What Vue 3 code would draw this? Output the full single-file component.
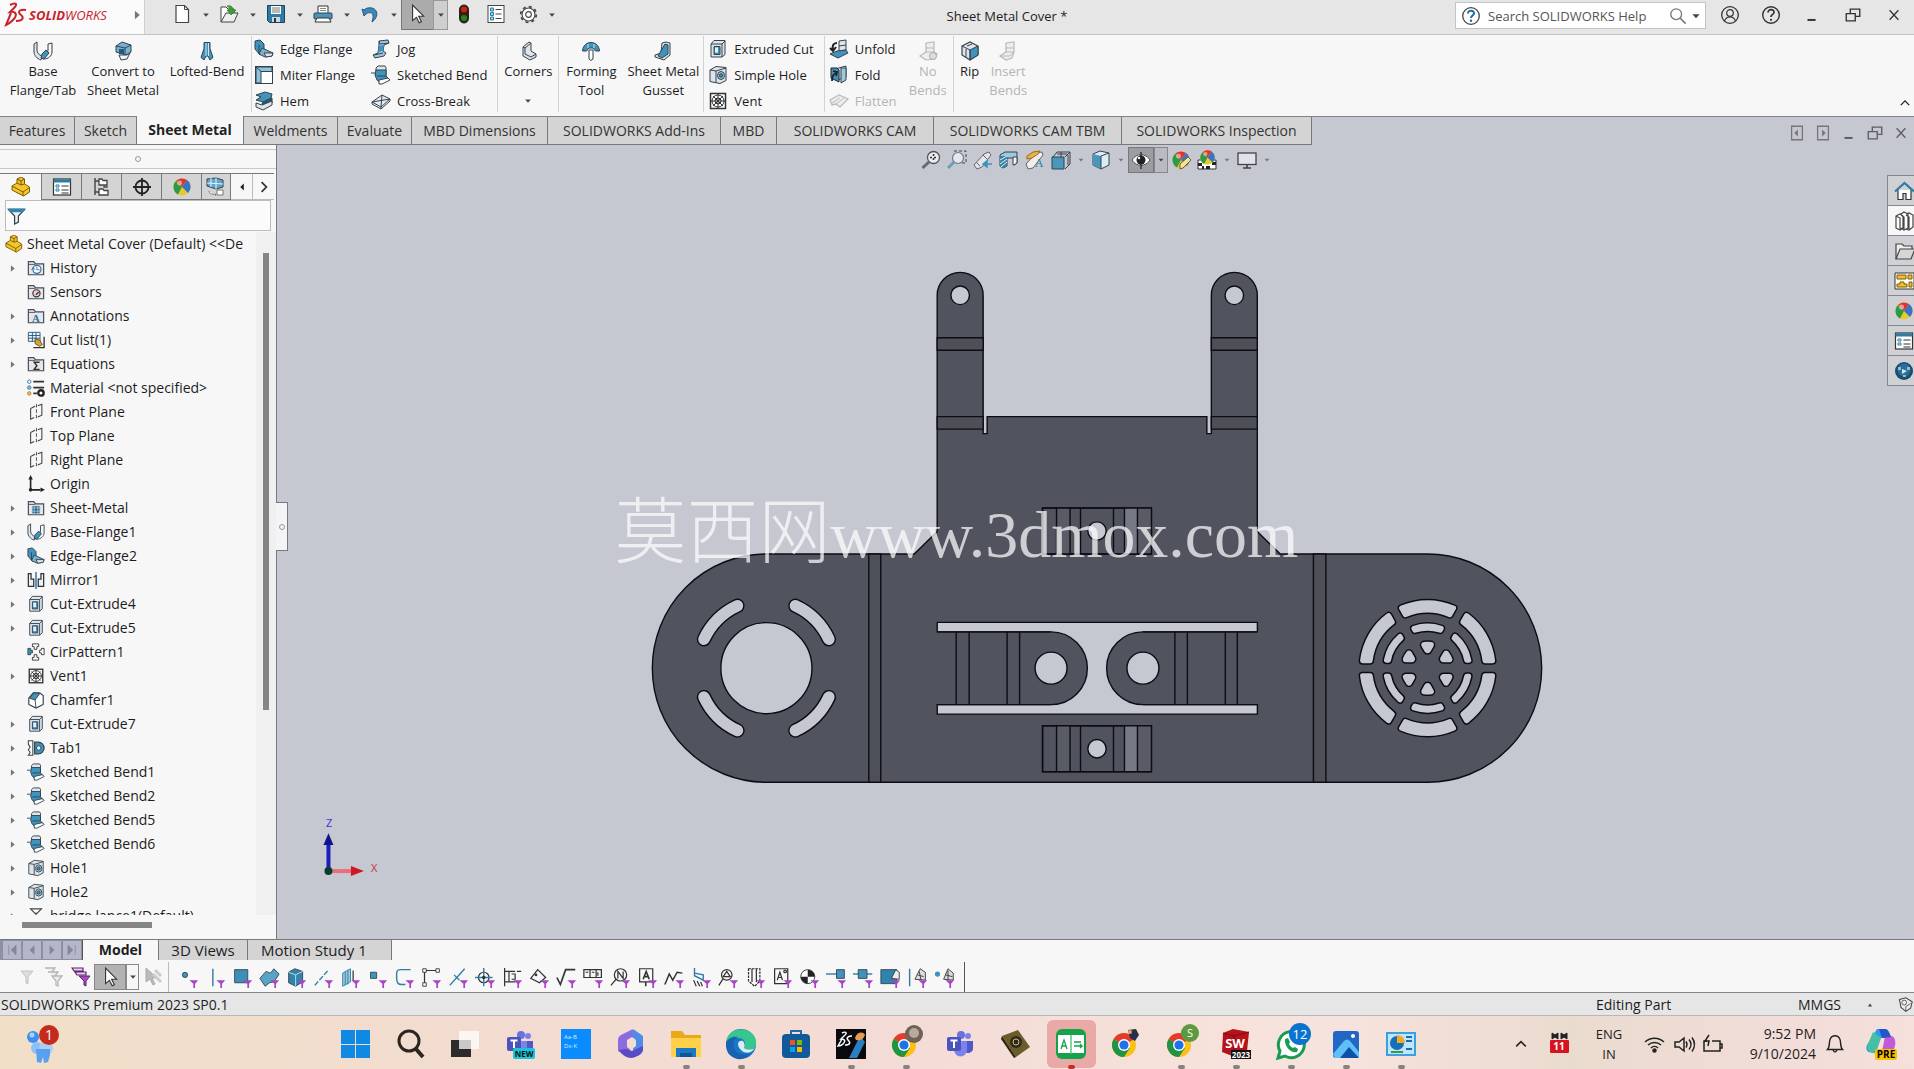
<script setup>
import { h } from 'vue'

const line = '#34424d'
const blue = '#3f93bd'
const pale = '#dfe4ea'

const folder = (inner) =>
  `<path d="M1.5 17.5V3h6l2 2.500h9v12z" fill="#e4e6ea" stroke="#444c55" stroke-width="1.300"/><path d="M2 6h7" stroke="#444c55"/>${inner}`
const plane = `<path d="M4 6l5-2.500M4 6v12l4-2M12 3l4.500-1.500v12l-4.500 2" fill="none" stroke="#444" stroke-width="1.200"/><path d="M10.500 1v17" stroke="#444" stroke-dasharray="4 2"/>`
const bend = `<path d="M5 3l2-2h7l1 1.500v8H5z" fill="${pale}" stroke="${line}"/><path d="M5 5h10v6l3 3-8 4-4-3-2-5z" fill="${blue}" stroke="${line}"/><path d="M0 8h4M6 11h9" stroke="${line}"/><path d="M8 15l9-2 2 2-8 4H8z" fill="#fff" stroke="${line}"/>`
const base = `<path d="M1 3l3-2v8c0 3 2 5 5 6l-1 4c-4-1-7-5-7-8z" fill="${pale}" stroke="${line}"/><path d="M15 3l4-1v9c0 4-4 7-8 7l-3-1 5-4c1-1 2-2 2-4z" fill="#f4f6f8" stroke="${line}"/><path d="M9 13l4-4 3 3-5 6-3-1z" fill="${blue}" stroke="${line}"/>`
const edge = `<path d="M1 2l5-1 4 4v8l-4 3-5-6z" fill="${blue}" stroke="${line}"/><path d="M5 6v9M8 9l11 5-1 3-7 1-6-3z" fill="#78b4d2" stroke="${line}"/><path d="M10 14l9 0-1 3-6 1z" fill="${pale}" stroke="${line}"/>`
const cut = `<path d="M3 5l3-3.500h11v14L14 18H3z" fill="${pale}" stroke="${line}"/><path d="M14 18V5H3M14 5l3-3" fill="none" stroke="${line}"/><path d="M6 7.500h6v8H6z" fill="${blue}" stroke="${line}"/><path d="M7 8.500h3v5H7z" fill="#e6f2f8"/>`
const hole = `<path d="M2 5l6-3.500 10 1v13l-6 3-10-2z" fill="${pale}" stroke="${line}"/><path d="M2 5l6 1v11.500M8 6l10-3" fill="none" stroke="${line}"/><ellipse cx="13" cy="10.500" rx="3.500" ry="4" fill="#9fc8dc" stroke="${line}"/><circle cx="13" cy="10.500" r="1.700" fill="${blue}" stroke="${line}"/>`
const vent = `<rect x="2.500" y="2.500" width="15" height="15" fill="#fff" stroke="#333" stroke-width="1.500"/><circle cx="10" cy="10" r="6" fill="none" stroke="#333"/><circle cx="10" cy="10" r="3" fill="none" stroke="#333"/><path d="M10 3v14M3 10h14M5 5l10 10M15 5L5 15" stroke="#333"/>`
const part = `<path d="M1 9l5-3V2l4-2 3.500 2v5l5 3v5l-6 4L1 13z" fill="#f5c52c" stroke="#7a5a00"/><path d="M1 9l11 6 6.500-4.500M12 15v4M6 6l4 2 3.500-1M6 2l4 2 3.500-2M10 4v4" fill="none" stroke="#7a5a00"/>`
const list = `<rect x="1.500" y="2" width="17" height="16" fill="#fff" stroke="#333" stroke-width="1.200"/><path d="M1.500 4h17" stroke="#2d7ca6" stroke-width="3"/><path d="M4 8h3v2H4zM4 12h3v2H4z" fill="none" stroke="#2d7ca6"/><path d="M9.500 9h7M9.500 13h7M9.500 16h7" stroke="#333"/>`
const ball = `<circle cx="10" cy="10" r="8.500" fill="#e8ca2e"/><path d="M10 10L4 4a8.500 8.500 0 0 1 11-1z" fill="#d33"/><path d="M10 10l5-7a8.500 8.500 0 0 1 1 13z" fill="#3a72c4"/><path d="M10 10L4 4a8.500 8.500 0 0 0 2 13.500z" fill="#2f9a45"/><circle cx="7.500" cy="6" r="2.500" fill="#fff" opacity=".5"/>`
const chrome = `<circle cx="14" cy="16" r="12" fill="#fbc116"/><path d="M14 16L3.600 10A12 12 0 0 1 24.400 10z" fill="#e33b2e"/><path d="M14 16L3.600 10A12 12 0 0 0 14 28l6-9z" fill="#229342"/><circle cx="14" cy="16" r="6" fill="#fff"/><circle cx="14" cy="16" r="4.600" fill="#1a73e8"/>`
const teams = `<circle cx="23" cy="8" r="3" fill="#7b83eb"/><circle cx="16" cy="7" r="4" fill="#6a72dc"/><path d="M19 13h9v8a5 5 0 0 1-8 3z" fill="#5059c9"/><path d="M9 13h13v9a6.500 6.500 0 0 1-13 0z" fill="#7b83eb"/><rect x="2" y="9" width="14" height="14" rx="2" fill="#4b53bc"/><path d="M5.500 12.500h7M9 12.500V20" stroke="#fff" stroke-width="2"/>`

const icons = {
  caret: `<path d="M6 8h8l-4 4.500z" fill="#444"/>`,
  caretUp: `<path d="M7 12h6l-3-4z" fill="#444"/>`,
  right: `<path d="M7 4l7 6-7 6z" fill="#777"/>`,
  left: `<path d="M13 4l-6 6 6 6z" fill="#222"/>`,
  chevR: `<path d="M7 4l6 6-6 6" fill="none" stroke="#333" stroke-width="2.200"/>`,
  chevU: `<path d="M4 13l6-6 6 6" fill="none" stroke="#222" stroke-width="1.900"/>`,
  newDoc: `<path d="M4 1.500h8.500l4 4v13H4z" fill="#fff" stroke="#444" stroke-width="1.200"/><path d="M12.500 1.500v4h4" fill="none" stroke="#444"/>`,
  open: `<path d="M2 18V3h5l2 2h6v4" fill="#fff" stroke="#444"/><path d="M2 18L7 9h12l-4 9z" fill="#eee" stroke="#444"/><path d="M8 2c4-1 6 1 6 4h3l-5 5-4-5h3c0-2-1-3-3-4z" fill="#3ba12f" stroke="#276c20" stroke-width=".6"/>`,
  save: `<path d="M1.500 1.500h17v17h-15l-2-2z" fill="#2d7ca6" stroke="#1f4257"/><path d="M5 2h10v8H5z" fill="#fff"/><path d="M6 4h8M6 6h8M6 8h8" stroke="#777"/><path d="M6 13h8v5H6z" fill="#cfd8de"/><path d="M8 14h2v4H8z" fill="#234"/>`,
  print: `<path d="M5 9V2h10v7" fill="#fff" stroke="#333"/><path d="M7 4.500h6M7 6.500h6" stroke="#888"/><rect x="1" y="9" width="18" height="6" rx="1" fill="#4c93b7" stroke="#26465a"/><path d="M4 14h12l2 4H2z" fill="#fff" stroke="#333"/>`,
  undo: `<path d="M2 5l2 7 2-2c4-3 8-1 7 4l-1 4c6-4 7-12 0-14-3-.700-6 0-8 2z" fill="#3f86b8" stroke="#24597e"/>`,
  cursor: `<path d="M6 2v14l3.500-3 2.500 5 2-1-2.500-5H16z" fill="#fff" stroke="#333"/>`,
  traffic: `<rect x="5.500" y="1" width="9" height="18" rx="4.500" fill="#3a1d10" stroke="#222"/><circle cx="10" cy="5.500" r="3" fill="#c62618"/><circle cx="10" cy="14" r="3" fill="#1f8a1a"/>`,
  options: `<rect x="2" y="1.500" width="16" height="17" fill="#fff" stroke="#444"/><path d="M4.500 4h3v3h-3zM4.500 8.500h3v3h-3zM4.500 13h3v3h-3z" fill="#9fd0e8" stroke="#2d7ca6"/><path d="M9.500 5.500h6M9.500 10h6M9.500 14.500h6" stroke="#444"/>`,
  gear: `<circle cx="10" cy="10" r="6.800" fill="#fff" stroke="#444" stroke-width="1.200"/><circle cx="10" cy="10" r="8.200" fill="none" stroke="#444" stroke-width="1.800" stroke-dasharray="3.200 3.240"/><circle cx="10" cy="10" r="3" fill="none" stroke="#444" stroke-width="1.200"/>`,
  query: `<circle cx="10" cy="10" r="8.300" fill="#fff" stroke="#444" stroke-width="1.300"/><path d="M7 7.500c0-4 6.500-3.500 6 0-.300 2-3 2-3 4.500" fill="none" stroke="#1b6fa5" stroke-width="2"/><circle cx="10" cy="14.800" r="1.200" fill="#1b6fa5"/>`,
  help: `<circle cx="10" cy="10" r="8.300" fill="none" stroke="#333" stroke-width="1.400"/><path d="M7 7.500c0-4 6.500-3.500 6 0-.300 2-3 2-3 4.500" fill="none" stroke="#333" stroke-width="1.700"/><circle cx="10" cy="14.800" r="1.100" fill="#333"/>`,
  user: `<circle cx="10" cy="10" r="8.300" fill="none" stroke="#333" stroke-width="1.300"/><circle cx="10" cy="8" r="3.300" fill="none" stroke="#333" stroke-width="1.200"/><path d="M4.500 16c1-3 3-4 5.500-4s4.500 1 5.500 4" fill="none" stroke="#333" stroke-width="1.200"/>`,
  magnify: `<circle cx="8" cy="8" r="6" fill="none" stroke="#777" stroke-width="1.500"/><path d="M12.500 12.500l6 6" stroke="#777" stroke-width="1.800"/>`,
  min: `<path d="M5 15.500h9" stroke="#333" stroke-width="2.200"/>`,
  restore: `<path d="M2.500 8.500h10v8h-10zM7 8V3.500h10.500v8H13" fill="none" stroke="#333" stroke-width="1.500"/>`,
  close: `<path d="M4.500 4l11 12M15.500 4l-11 12" stroke="#333" stroke-width="1.600"/>`,
  dockL: `<path d="M4 2.500h12v15H4z" fill="none" stroke="#555" stroke-width="1.400"/><path d="M11 6v8l-4-4z" fill="#555"/>`,
  dockR: `<path d="M4 2.500h12v15H4z" fill="none" stroke="#555" stroke-width="1.400"/><path d="M9 6v8l4-4z" fill="#555"/>`,
  base, edge, cut, hole, vent, bend, part, list, ball,
  convert: `<path d="M3 5l6-4 9 3v7l-5 3-10-3z" fill="#74b2d0" stroke="${line}"/><path d="M3 5l9 2v6M12 7l6-3" fill="none" stroke="${line}"/><path d="M6 8h5v5H6z" fill="#24597e"/><path d="M6 14h8l3-2-3 6-6 1z" fill="#f2f4f6" stroke="${line}"/>`,
  loft: `<path d="M7 1.500h6v6l3 9-3 2.500-2-4H9l-2 4-3-2.500 3-9z" fill="${blue}" stroke="${line}"/><path d="M9 2v13M11.500 2v13" stroke="#cfe5ef"/>`,
  miter: `<rect x="1.500" y="1.500" width="17" height="17" fill="#fff" stroke="${line}"/><path d="M2 2h16v4.500H7V18H2z" fill="#8cc3dd" stroke="${line}"/><path d="M2 2l5 4.500" stroke="${line}"/>`,
  hem: `<path d="M2 4l9-3 7 2-1 4-8 4-7-2 5-3z" fill="${blue}" stroke="${line}"/><path d="M18 7v5l-9 4-1-4z" fill="#24597e" stroke="${line}"/><path d="M2 12l6 2 10-4v4l-9 5-7-3z" fill="${pale}" stroke="${line}"/>`,
  jog: `<path d="M8 2l9-1 1 3-5 2-1 6 3 2-2 3-9 2-2-3 5-2 1-8z" fill="#9cc9df" stroke="${line}"/><path d="M8 2l1 3 9-1M3 16l9-2" fill="none" stroke="${line}"/><path d="M8 7l5-1-1 6-5 1z" fill="${blue}"/>`,
  cross: `<path d="M1 11l10-7 8 4-9 8z" fill="#e7ebf0" stroke="${line}"/><path d="M1 11l18-3M11 4l-1 12M10 16v2L1 13v-2M19 8v2l-9 8" fill="none" stroke="${line}"/>`,
  corner: `<path d="M5 6l6-5 2 1v8l5 3v3l-6 3-7-4z" fill="${pale}" stroke="${line}"/><path d="M5 6l2 1 6-5M7 7v6l6 3 5-3" fill="none" stroke="${line}"/>`,
  forming: `<path d="M1.500 10C2 4 6 1.500 10 1.500S18 4 18.500 10h-4L12 7H8l-2.500 3z" fill="${blue}" stroke="${line}"/><path d="M8 9h4v9l-2 1.500L8 18z" fill="#fff" stroke="${line}"/><path d="M7 3v4M13 3v4" stroke="#cfe5ef"/>`,
  gusset: `<path d="M9 2l4-1 4 1v12l-6 5-9-3v-2l6-2z" fill="#dbe3ea" stroke="${line}"/><path d="M12 3l3 1v9l-6 4-4-2z" fill="${blue}" stroke="${line}"/>`,
  unfold: `<path d="M10 2l7-1v10l-7 1zM10 7l7-1" fill="${pale}" stroke="${line}"/><path d="M8 12l9-1 2 3-10 5-8-4z" fill="${blue}" stroke="${line}"/><path d="M8 4c-4 0-5 3-4 7M1 9l3 3 3-4" fill="none" stroke="#222" stroke-width="2"/>`,
  fold: `<path d="M6 4l11-3v11l-9 3z" fill="${pale}" stroke="${line}"/><path d="M12 3l5 0v12l-5 3z" fill="#9cc9df" stroke="${line}"/><path d="M2 3l6 0 2 2v12l-8-4z" fill="${blue}" stroke="#222"/><path d="M3 16c0-5 1-7 4-8M4 6l4 1-1 4" fill="none" stroke="#222" stroke-width="1.800"/>`,
  flatten: `<path d="M1 9l9-5 9 4-8 8-4-3-4 1z" fill="#eee" stroke="#bbb" stroke-width="1.300"/><path d="M3 12l8-5M7 13l8-6" stroke="#bbb"/>`,
  noBends: `<path d="M8 2l8-1v10l3 2-3 5-8 1-6-4 6-4z" fill="#eee" stroke="#b9b9b9" stroke-width="1.200"/><path d="M8 7h8M8 11h8" stroke="#b9b9b9"/><circle cx="15" cy="15" r="3.500" fill="#ddd" stroke="#aaa"/>`,
  insBends: `<path d="M8 2l8-1v10l-2 6-6 2-6-4 6-4z" fill="#eee" stroke="#b9b9b9" stroke-width="1.200"/><path d="M8 7h8M8 11h8M2 15h10l4-4" fill="none" stroke="#b9b9b9"/>`,
  rip: `<path d="M2 5l8-4 8 4v9l-8 5-8-5z" fill="${pale}" stroke="${line}" stroke-width="1.200"/><path d="M10 9l8-4v9l-8 5z" fill="${blue}" stroke="${line}"/><path d="M2 5l8 4v10M7 5l5-2M6 8v8" fill="none" stroke="${line}"/>`,
  tree: `<path d="M3 1v17M3 4h4M3 15h4" stroke="#444" stroke-width="1.400"/><path d="M7 2h3l1 1.500h4V8H7zM7 12h4l1 1.500h4V18H7zM12 8v2h3V8" fill="#fff" stroke="#444" stroke-width="1.300"/>`,
  target: `<circle cx="10" cy="10" r="6.500" fill="none" stroke="#222" stroke-width="1.800"/><path d="M10 1v18M1 10h18" stroke="#222" stroke-width="1.800"/>`,
  cam: `<path d="M1 2l9-1 7 2v7l-7 2-9-3z" fill="#5fa6ca" stroke="${line}"/><path d="M5 1v9M10 1v11M1 6l16 1" stroke="#eaf4f9"/><path d="M3 14c0 3 4 4 7 3l-1 2M11 13h6v5h-6z" fill="#fff" stroke="#777"/>`,
  funnel: `<path d="M1.500 3.500h17L12 10.500V17l-4 2v-8.500z" fill="#eef1f3" stroke="${line}" stroke-width="1.300"/><path d="M1.500 2.500h17v2.500l-2 1.500h-13l-2-2z" fill="#3286ae"/>`,
  history: folder(`<circle cx="11" cy="11.500" r="4.500" fill="#fff" stroke="#2d6ea8" stroke-width="1.300"/><path d="M11 8.500v3.500h3M5 12l2-2.500L9 12" fill="none" stroke="#2d6ea8"/>`),
  sensors: folder(`<circle cx="10.500" cy="11.500" r="4" fill="#f3cfd6" stroke="#333" stroke-width="1.300"/><path d="M10 13l3-3" stroke="#333" stroke-width="1.500"/>`),
  annot: folder(`<text x="10" y="16.500" font-family="Liberation Serif, serif" font-weight="bold" font-size="12" text-anchor="middle" fill="#2b6fa0">A</text>`),
  cutlist: `<path d="M1.500 1.500h13v10h-13zM1.500 5h13M1.500 8h13M6 1.500v10M10 1.500v10" fill="#e8f2f8" stroke="#24597e"/><path d="M7 18.500h12v-12" fill="none" stroke="#333" stroke-width="1.500"/><path d="M9 9l5 1 3 5-3 2-5-3z" fill="#d9a33a" stroke="#6b4a10"/>`,
  equations: folder(`<path d="M14 8H8l3 4-3 4h6" fill="none" stroke="#333" stroke-width="1.600"/>`),
  material: `<circle cx="2.500" cy="3" r="1.900" fill="#fff" stroke="#2d6ea8"/><circle cx="2.500" cy="9.500" r="1.900" fill="#8cc3dd" stroke="#2d6ea8"/><circle cx="2.500" cy="16" r="1.900" fill="#f0c46a" stroke="#a87620"/><path d="M7 3h12M7 9.500h12M7 16h4" stroke="#333" stroke-width="2"/><circle cx="15.500" cy="15.500" r="3" fill="#fff" stroke="#222" stroke-width="2.600"/>`,
  plane,
  origin: `<path d="M4 4v12.500h11" fill="none" stroke="#222" stroke-width="1.800"/><path d="M4 0L1.500 5h5zM20 16.500l-5-2.500v5z" fill="#222"/><circle cx="4" cy="16.500" r="2" fill="#222"/>`,
  sheet: folder(`<path d="M6 8h8v8H6z" fill="#24597e"/><path d="M8 7v10M12 7v10M5 10h10M5 13.500h10" stroke="#9cc9df"/>`),
  mirror: `<path d="M1.500 3v14h6V9h-3V3zM18.500 3v14h-6V9h3V3z" fill="#e8f2f8" stroke="#333" stroke-width="1.400"/><path d="M10 1v19" stroke="#2d6ea8" stroke-width="1.600"/>`,
  cirpat: `<path d="M6 1h7v3h-2v3H8V4H6zM6 19h7v-3h-2v-3H8v3H6zM19 6v7h-3v-2h-2V8h2V6z" fill="#fff" stroke="#444" stroke-width="1.100"/><path d="M1 6v7h3v-2h2V8H4V6z" fill="${blue}" stroke="${line}"/>`,
  chamfer: `<path d="M2 8l5-6 7 0 4 3v10l-8 4-8-4z" fill="#fff" stroke="${line}" stroke-width="1.300"/><path d="M3 8l5-6 6 1-5 7z" fill="${blue}" stroke="${line}"/><path d="M9 10l1 9" stroke="${line}"/>`,
  tab: `<path d="M1.500 2h5v16h-5l2-3-2-3 2-3-2-3z" fill="#fff" stroke="#444" stroke-width="1.200"/><path d="M8.500 3.500h4a6.500 6.500 0 0 1 0 13h-4z" fill="${blue}" stroke="${line}" stroke-width="1.300"/><circle cx="13" cy="10" r="2.500" fill="#dff0f8" stroke="${line}"/>`,
  bridge: `<path d="M4 2h12l-5 5h-2zM10 7v10" fill="#fff" stroke="#444" stroke-width="1.300"/>`,
  zoomFit: `<circle cx="12.500" cy="7.500" r="6" fill="#e9edf1" stroke="#555" stroke-width="1.300"/><path d="M8 12l-6.500 6" stroke="#5b6c77" stroke-width="3"/><path d="M12.500 4v7M9 7.500h7" stroke="#333" stroke-width="1.500" stroke-dasharray="2 2"/>`,
  zoomArea: `<path d="M7 1h12v12h-4" fill="none" stroke="#444" stroke-dasharray="3 2"/><circle cx="11" cy="8" r="5.500" fill="#e3e8ee" stroke="#777" stroke-width="1.200"/><path d="M7 12l-6 6" stroke="#69a0b5" stroke-width="3"/>`,
  prev: `<path d="M1 15L11 4l5-2 2 3-9 12-5 2z" fill="#e2e5e9" stroke="#666"/><path d="M3 12l4 4M10 5l4 4" stroke="#666"/><path d="M19 14h-6M14 11l-4 3 4 3z" fill="${blue}" stroke="${blue}" stroke-width="1.500"/>`,
  section: `<path d="M1 5l5-3h12v11l-3 2V8H8v8l-4 2-3-2z" fill="#9cc9df" stroke="${line}"/><path d="M1 6h7v10l-4 2-3-2z" fill="#3582a8"/><path d="M1 10l7-4M1 14l7-5M2 17l6-5" stroke="#e4f2f8"/><path d="M14 7h4v6l-3 2h-1z" fill="#eef3f6" stroke="${line}"/>`,
  hide: `<path d="M1 14L11 3l6-1 1 3-10 13-5 1z" fill="#eee" stroke="#666"/><path d="M2 6l6-4 7-1-2 3-6 4-5 1z" fill="#e9b24a" stroke="#9a6a14"/><text x="14" y="17" font-family="Liberation Serif, serif" font-size="12" text-anchor="middle" fill="#2d7ca6">A</text>`,
  orient: `<path d="M1 7h12v12H1z" fill="#4a96bd" stroke="${line}"/><path d="M2 7l4-5h13v12l-5 5M14 7l5-5M6 4h10M17 5v10M10 2v5" fill="none" stroke="${line}"/>`,
  cube: `<path d="M2 4l7-3 9 2v12l-8 4-8-4z" fill="#dcecf4" stroke="${line}"/><path d="M2 4l8 2v13l-8-4z" fill="#4a96bd"/><path d="M10 6v13M10 6l8-3" stroke="${line}"/>`,
  eye: `<path d="M1 10c4-7 14-7 18 0-4 7-14 7-18 0z" fill="#fff" stroke="#555"/><circle cx="10" cy="10" r="4.500" fill="#222"/><path d="M10 2v17" stroke="#222" stroke-width="1.300"/><circle cx="8" cy="8" r="1.200" fill="#fff"/>`,
  appear: ball + `<path d="M9 14l8-7 3 3-8 8-3 1z" fill="#f3e3a0" stroke="#7a5a1a"/>`,
  scene: `<path d="M1 10h18v9H1z" fill="#fff" stroke="#333"/><path d="M1 13h4v3H1zM9 16h4v3H9zM15 12h4v3h-4zM5 16h2v3H5z" fill="#222"/><g transform="translate(2 -1) scale(.85)">${ball}</g>`,
  monitor: `<rect x="1" y="3" width="18" height="11.500" fill="#dfe2e8" stroke="#444" stroke-width="1.300"/><path d="M10 15v2.500M6 18h8" stroke="#444" stroke-width="1.600"/>`,
  home: `<path d="M4 9v9.500h5v-6h3v6h5V9" fill="#fff" stroke="#333" stroke-width="1.200"/><path d="M1 10.500L10.500 2 20 10.500" fill="none" stroke="#2d7ca6" stroke-width="2.200"/>`,
  books: `<path d="M2 5l4-2 3 2v12l-3 2-4-2zM7 3l3-2 4 2v14l-4 2-3-2M12 3l3-1 4 2v12l-4 3-3-1M2 5l4 2v11M7 4l3 2v12M12 4l3 2v12" fill="#fff" stroke="#444" stroke-width="1.200"/>`,
  folderOpen: `<path d="M2 18V3h6l2 2h8v3" fill="#eee" stroke="#444" stroke-width="1.200"/><path d="M2 18L6 8h15l-4 10z" fill="#d6d6d6" stroke="#444" stroke-width="1.200"/>`,
  palette: `<path d="M1 2h19v16H1z" fill="#fff" stroke="#333"/><path d="M3 4h9v4H3zM3 16v-3h3v-2h4v2h3v3zM14 4h4v4h-4zM15 11h3v5h-3z" fill="#f2c02b" stroke="#7a5a00"/>`,
  globe: `<circle cx="10" cy="10" r="9" fill="#1a4d70"/><circle cx="10" cy="9" r="6.500" fill="#2b6f98"/><path d="M4 6h3v3H4zM13 6h3v3h-3zM9 14h3v2H9z" fill="#bfe0ef" opacity=".7"/><path d="M8 8l5 2-5 3z" fill="#cfe8f3"/>`,
  first: `<path d="M6 4v12M15 4l-6 6 6 6z" fill="#84869a" stroke="#84869a"/>`,
  prv: `<path d="M13 4l-6 6 6 6z" fill="#84869a"/>`,
  nxt: `<path d="M7 4l6 6-6 6z" fill="#84869a"/>`,
  last: `<path d="M14 4v12M5 4l6 6-6 6z" fill="#84869a" stroke="#84869a"/>`,
  filt0: `<path d="M4 4h12l-5 6v7l-2-1v-6z" fill="#ddd" stroke="#c4c4c4"/>`,
  filt1: `<path d="M1 1h10l-3 4M4 5h10l-3 4M8 9h10l-4 5v5l-2-1v-4z" fill="#eee" stroke="#b5b5b5" stroke-width="1.300"/>`,
  filt2: `<path d="M1 1h11v3H3zM4 5h11v3H6z" fill="#e8d5ef" stroke="#5f2270" stroke-width="1.200"/><path d="M8 9h11l-4 5v5l-2-1v-4z" fill="#a54cc4" stroke="#5f2270"/>`,
  mag0: `<path d="M3 1v14l4-3 3 6 2-1-3-6h5z" fill="#bbb" stroke="#aaa"/><path d="M12 3l6 6M10 7l8 8" stroke="#ccc" stroke-width="3"/>`,
  status: `<path d="M3 3l8-2 8 5-2 8-6 4-6-5z" fill="#eee" stroke="#444" stroke-width="1.300"/><circle cx="9" cy="7" r="3" fill="none" stroke="#444"/><path d="M11 12l6-4M11 12v6" stroke="#444"/>`
}

// selection-filter glyphs, drawn beside the small purple funnel
const fs = `<path d="M13 15h10l-3.500 4v5h-2v-5z" fill="#a347c2"/>`
const dk = 'fill="none" stroke="#333" stroke-width="1.400"'
const bl = 'fill="none" stroke="#2d7ca6" stroke-width="1.600"'
const filters = [
  `<circle cx="8" cy="9" r="3" fill="${blue}" stroke="${line}"/>`,
  `<path d="M9 2v20" ${bl}/>`,
  `<path d="M3 3h15v15H3z" fill="#3c8fb8" stroke="${line}"/>`,
  `<path d="M1 13l7-8 5 2 4-5 6 6-6 9-5 1-5 4z" fill="#58a4c6" stroke="${line}"/>`,
  `<path d="M3 6l7-4 9 3v12l-8 5-8-4z" fill="#2f83ac" stroke="${line}"/><path d="M3 6l8 3 8-4M11 9v13" stroke="#cfe5ef" fill="none"/>`,
  `<path d="M2 21L18 3" stroke="#2d7ca6" stroke-width="1.500" stroke-dasharray="6 2"/>`,
  `<path d="M3 7l9-5v15l-9 5z" fill="#9cc9df" stroke="#2d7ca6"/><path d="M6 5v16M9 3v17" stroke="#2d7ca6"/><path d="M15 4v12" ${dk}/>`,
  `<path d="M4 6h7v7H4z" fill="${blue}" stroke="${line}"/>`,
  `<path d="M19 3H7c-4 0-4 3-4 6v4c0 5 2 7 6 7h4" ${bl}/>`,
  `<path d="M4 21V4h15" ${dk}/><path d="M2 2h4v4H2zM17 2h4v4h-4zM2 18h4v4H2z" fill="#fff" stroke="#333"/>`,
  `<path d="M2 21L19 2" ${bl}/><path d="M7 9l6 6" ${bl}/>`,
  `<circle cx="10" cy="12" r="6" ${dk}/><path d="M10 1v21M0 12h20" ${bl}/><circle cx="10" cy="12" r="2" fill="#333"/>`,
  `<path d="M3 1v21M3 5h12M3 17h12M8 5v12M11 8h4v6h-4" ${dk}/><path d="M17 5h5" ${dk}/>`,
  `<path d="M2 13l8-10 9 9-7 6z" ${dk}/><circle cx="8" cy="9" r="1.500" fill="#333"/>`,
  `<path d="M1 12l4 8L11 3h11" fill="none" stroke="#333" stroke-width="1.900"/>`,
  `<path d="M1 3h20v9H1zM8 3v9M15 3v9" ${dk}/><path d="M3 6h3M10 6h3M17 6v4" ${dk}/>`,
  `<circle cx="12" cy="9" r="7" ${dk}/><path d="M9 13V5l6 8V5M7 14l-6 7" ${dk}/>`,
  `<path d="M3 2h15v15H3z" ${dk}/><path d="M7 14l3.500-9L14 14M8 11h5M10 17v5" fill="none" stroke="#333" stroke-width="1.800"/>`,
  `<path d="M1 20l5-12 4 7 5-9 6 1" fill="none" stroke="#333" stroke-width="1.700"/>`,
  `<path d="M4 1v9l10 5V9L4 7" ${bl}/><path d="M3 15l3 7M7 16l3 6M11 17l2 5" ${dk}/>`,
  `<circle cx="10" cy="9" r="6" ${dk}/><path d="M6 11l4-6 4 6zM6 13l-5 8" ${dk}/>`,
  `<path d="M4 2h13v14l-6 6-7-6z" fill="none" stroke="#333" stroke-width="1.400" stroke-dasharray="3 1"/><path d="M8 2v15M13 2v15" ${dk}/>`,
  `<path d="M3 2h15v17H3z" ${dk}/><path d="M6 15l3-9 3 9M7 12h4" ${dk}/><circle cx="15" cy="5" r="1.500" ${dk}/>`,
  `<circle cx="10" cy="11" r="8" fill="#fff" stroke="#333"/><path d="M10 11V3a8 8 0 0 1 8 8zM10 11v8a8 8 0 0 1-8-8z" fill="#222"/>`,
  `<path d="M0 8h12" ${bl}/><path d="M12 3h9v10h-9z" fill="${blue}" stroke="${line}"/>`,
  `<path d="M0 8h22" ${bl}/><path d="M6 3h10v10H6z" fill="${blue}" stroke="${line}"/>`,
  `<path d="M1 3h18v16H1z" fill="#2f83ac" stroke="${line}"/><path d="M13 13l5-10 4 3v8z" fill="#eee" stroke="#333"/>`,
  `<path d="M3 2v20" ${bl}/><path d="M9 14l6-12 6 4v9z" fill="#ddd" stroke="#333"/><path d="M12 9l7 2M14 5l2 10" stroke="#333"/>`,
  `<circle cx="4" cy="8" r="3" fill="${blue}"/><path d="M11 14l5-12 6 5v8z" fill="#ddd" stroke="#333"/><path d="M13 9l8 2M16 4v11" stroke="#333"/>`
].map((g) => g + fs)

const apps = [
  { n: 'Start', g: `<path d="M1 2h14v14H1zM16 2h14v14H16zM1 17h14v13H1zM16 17h14v13H16z" fill="#1089e4"/>` },
  { n: 'Search', g: `<circle cx="14" cy="13" r="10" fill="none" stroke="#2b2522" stroke-width="3"/><path d="M21 21l7 8" stroke="#2b2522" stroke-width="4"/>` },
  { n: 'Task View', g: `<path d="M1 12h20v17H1z" fill="#2d2b2a"/><path d="M9 3h20v18H9z" fill="#fff" opacity=".75"/>` },
  { n: 'Teams', g: teams + `<rect x="8" y="20" width="22" height="11" rx="2" fill="#18c5d9"/><text x="19" y="29" font-family="Open Sans, sans-serif" font-weight="bold" font-size="8" text-anchor="middle" fill="#111">NEW</text>` },
  { n: 'Calculator', g: `<path d="M1 1h30v30H1z" fill="#0a8cff"/><text x="4" y="11" font-family="Open Sans, sans-serif" font-size="6" fill="#d9ecff">Aa-B</text><text x="4" y="20" font-family="Open Sans, sans-serif" font-size="6" fill="#d9ecff">Dx-K</text>` },
  { n: 'Microsoft 365', g: `<path d="M16 2c2-1 4 0 5 1l7 5v14c0 3-3 5-5 6l-5-3V13l-8-5z" fill="#4f8be8"/><path d="M16 2L6 7c-2 1-3 3-3 5v11l7 4c4 1 5-1 5-4V12c0-2 2-3 4-4z" fill="#8d6bdf"/><path d="M4 22c2 4 7 8 12 8s10-4 12-8v-4l-11 5-6-2z" fill="#5a4ac4"/><path d="M12 12l5-3 4 3v6l-5 4-4-3z" fill="#f1ddd2"/>` },
  { n: 'File Explorer', run: 1, g: `<path d="M1 3h11l3 4h16v20H1z" fill="#e9a918"/><path d="M1 10h30v19H1z" fill="#ffd04a"/><path d="M6 20h20v9H6z" fill="#1979c4"/><path d="M10 25h12v4H10z" fill="#0b5796"/>` },
  { n: 'Edge', run: 1, g: `<circle cx="16" cy="16" r="15" fill="#1778c8"/><path d="M1 15C2 4 12 0 20 2c9 2 12 9 11 15-1 5-8 6-12 3 3-5 0-10-6-10C7 10 2 12 1 15z" fill="#36c78f"/><path d="M1 15c2-5 7-7 12-6-5 2-6 8-3 13 3 4 9 6 16 3-5 7-14 8-20 3-4-3-5-8-5-13z" fill="#1762b3"/><path d="M13 16c0-3 3-4 5-3 2 2 2 5 1 7 3 2 8 2 11 0-3 5-9 6-13 3-2-2-4-4-4-7z" fill="#fff" opacity=".85"/>` },
  { n: 'Store', g: `<path d="M11 6V3h10v3" fill="none" stroke="#1c6aa6" stroke-width="2"/><rect x="2" y="6" width="28" height="24" rx="4" fill="#12599a"/><path d="M10 12h5v5h-5z" fill="#f25022"/><path d="M17 12h5v5h-5z" fill="#7fba00"/><path d="M10 19h5v5h-5z" fill="#00a4ef"/><path d="M17 19h5v5h-5z" fill="#ffb900"/>` },
  { n: '3DEXPERIENCE', run: 1, g: `<path d="M1 1h30v30H1z" fill="#0a0a0e"/><path d="M14 30L25 8l5 6-8 16z" fill="#2a7fc0"/><path d="M20 10c2-6 8-7 10-3-2 5-5 6-9 5z" fill="#e79a55"/><path d="M7 5c4-2 6 0 2 3L6 11c4 0 5 2 2 5-2 2-3 2-5 2l4-7M17 8c-4 0-6 2-4 4 3 3 2 5-3 5" fill="none" stroke="#fff" stroke-width="1.500"/>` },
  { n: 'Chrome', run: 1, g: `<g transform="translate(0 1)">${chrome}</g><circle cx="24" cy="6" r="9" fill="#6d6258"/><circle cx="24" cy="5" r="5" fill="#b9aa9b"/>` },
  { n: 'Teams', g: teams },
  { n: 'CAM tool', g: `<path d="M2 8L18 2l12 17-14 10z" fill="#6b5c2c"/><path d="M2 8l14 21-2 1L1 11z" fill="#2d2714"/><circle cx="16" cy="14" r="6" fill="#2e2a1c"/><circle cx="16" cy="14" r="3" fill="none" stroke="#cdbd7a"/>` },
  { n: 'Translate', run: 2, g: `<rect x="1" y="1" width="30" height="30" rx="6" fill="#15a34a"/><path d="M3 7h12l1 1 1-1h12v18H17l-1 1-1-1H3z" fill="#fff"/><path d="M16 8v18" stroke="#15a34a"/><path d="M6 21l3-9 3 9M7 18h4M19 14h7M19 18h8l-2-2M25 20l2-2" fill="none" stroke="#15a34a" stroke-width="1.300"/>` },
  { n: 'Chrome', g: `<g transform="translate(0 1)">${chrome}</g><path d="M18 2l8-1 3 6-4 6-5-3z" fill="#23304a"/><circle cx="20" cy="4" r="2" fill="#e2a36b"/>` },
  { n: 'Chrome', run: 1, g: `<g transform="translate(0 1)">${chrome}</g><circle cx="25" cy="5" r="9" fill="#5d9a3f"/><text x="25" y="9" font-family="Open Sans, sans-serif" font-size="11" text-anchor="middle" fill="#fff">S</text>` },
  { n: 'SOLIDWORKS', run: 1, g: `<path d="M3 5l10-4 16 3-2 19-12 6L2 24z" fill="#b5121b"/><path d="M3 5l11 3 15-4M14 8v20" fill="none" stroke="#7d0b12"/><text x="15" y="20" font-family="Open Sans, sans-serif" font-weight="bold" font-size="13" text-anchor="middle" fill="#fff">SW</text><path d="M11 22h20v9H11z" fill="#111"/><text x="21" y="30" font-family="Open Sans, sans-serif" font-weight="bold" font-size="8" text-anchor="middle" fill="#fff">2023</text>` },
  { n: 'WhatsApp', run: 1, g: `<path d="M3 30l2-7A13 13 0 1 1 10 28z" fill="#fff" stroke="#179c51" stroke-width="3"/><path d="M10 11l3-1 2 4-1 2c1 2 2 3 4 4l2-1 3 2-1 3c-6 2-13-6-12-13z" fill="#179c51"/><circle cx="25" cy="6" r="11" fill="#0a73cf"/><text x="25" y="11" font-family="Open Sans, sans-serif" font-size="13" text-anchor="middle" fill="#fff">12</text>` },
  { n: 'Photos', run: 1, g: `<rect x="3" y="3" width="26" height="27" rx="3" fill="#2067c6"/><path d="M3 26l11-13c2-2 4-2 6 0l9 11v4l-2 2H5z" fill="#5fc0f7"/><path d="M10 30l9-11 10 11z" fill="#0f4fa6"/><circle cx="23" cy="8" r="2" fill="#fff"/>` },
  { n: 'Control Panel', run: 1, g: `<rect x="1" y="4" width="30" height="24" fill="#3aa0e0"/><rect x="3" y="6" width="26" height="20" fill="#bfe6fa"/><circle cx="12" cy="15" r="7" fill="#1370b8"/><path d="M12 15V7a8 8 0 0 1 8 8z" fill="#f5a623"/><path d="M21 9h6M21 13h6M21 21h6" stroke="#1370b8" stroke-width="2"/><path d="M6 24h12" stroke="#3c9a3c" stroke-width="2"/>` }
]

const Ico = (props) =>
  h('svg', {
    viewBox: props.box || '0 0 20 20',
    width: props.size || 20,
    height: props.size || 20,
    'aria-hidden': 'true',
    innerHTML: props.g || icons[props.name]
  })
Ico.props = ['name', 'size', 'box', 'g']

const quick = [
  ['newDoc', 'New'], ['open', 'Open'], ['save', 'Save'], ['print', 'Print'], ['undo', 'Undo']
]
const ribbonTabs = ['Features', 'Sketch', 'Sheet Metal', 'Weldments', 'Evaluate', 'MBD Dimensions', 'SOLIDWORKS Add-Ins', 'MBD', 'SOLIDWORKS CAM', 'SOLIDWORKS CAM TBM', 'SOLIDWORKS Inspection']
const colA = [['edge', 'Edge Flange'], ['miter', 'Miter Flange'], ['hem', 'Hem']]
const colB = [['jog', 'Jog'], ['bend', 'Sketched Bend'], ['cross', 'Cross-Break']]
const colC = [['cut', 'Extruded Cut'], ['hole', 'Simple Hole'], ['vent', 'Vent']]
const colD = [['unfold', 'Unfold'], ['fold', 'Fold'], ['flatten', 'Flatten', 1]]

const panelTabs = [['part', 'FeatureManager'], ['list', 'PropertyManager'], ['tree', 'ConfigurationManager'], ['target', 'DimXpert'], ['ball', 'DisplayManager']]
const tree = [
  ['history', 'History', 1], ['sensors', 'Sensors'], ['annot', 'Annotations', 1], ['cutlist', 'Cut list(1)', 1],
  ['equations', 'Equations', 1], ['material', 'Material <not specified>'], ['plane', 'Front Plane'],
  ['plane', 'Top Plane'], ['plane', 'Right Plane'], ['origin', 'Origin'], ['sheet', 'Sheet-Metal', 1],
  ['base', 'Base-Flange1', 1], ['edge', 'Edge-Flange2', 1], ['mirror', 'Mirror1', 1], ['cut', 'Cut-Extrude4', 1],
  ['cut', 'Cut-Extrude5', 1], ['cirpat', 'CirPattern1'], ['vent', 'Vent1', 1], ['chamfer', 'Chamfer1'],
  ['cut', 'Cut-Extrude7', 1], ['tab', 'Tab1', 1], ['bend', 'Sketched Bend1', 1], ['bend', 'Sketched Bend2', 1],
  ['bend', 'Sketched Bend5', 1], ['bend', 'Sketched Bend6', 1], ['hole', 'Hole1', 1], ['hole', 'Hole2', 1],
  ['bridge', 'bridge lance1(Default)', 1]
]
const heads = [
  ['zoomFit', 'Zoom to Fit'], ['zoomArea', 'Zoom to Area'], ['prev', 'Previous View'], ['section', 'Section View'],
  ['hide', 'Dynamic Annotation Views'], ['orient', 'View Orientation', 1], ['cube', 'Display Style', 1],
  ['eye', 'Hide/Show Items', 1, 1], ['appear', 'Edit Appearance'], ['scene', 'Apply Scene', 1], ['monitor', 'View Settings', 1]
]
const pane = [['home', 'Resources'], ['books', 'Design Library'], ['folderOpen', 'File Explorer'], ['palette', 'View Palette'], ['ball', 'Appearances'], ['list', 'Custom Properties'], ['globe', 'Forum']]

// vent openings: ring sectors between spokes, shrunk by the corner radius
const sector = (mid, inner, outer, gap) => {
  const pt = (r, a) => `${(r * Math.cos(a)).toFixed(2)} ${(r * Math.sin(a)).toFixed(2)}`
  const half = Math.PI / 6
  const spread = (r) => Math.max(0, half - Math.asin(Math.min(1, gap / r)))
  const o = spread(outer)
  const i = spread(inner)
  return `M${pt(inner, mid - i)}L${pt(outer, mid - o)}A${outer} ${outer} 0 0 1 ${pt(outer, mid + o)}L${pt(inner, mid + i)}A${inner} ${inner} 0 0 0 ${pt(inner, mid - i)}Z`
}
const vents = []
for (let k = 0; k < 6; k++) {
  const a = (k * Math.PI) / 3 + Math.PI / 6
  vents.push(
    { d: sector(a, 58, 65.5, 7.5), w: 6 },
    { d: sector(a, 40, 42, 8), w: 6 },
    { d: sector(a, 18, 23.5, 8.8), w: 7 }
  )
}
const slots = [0, 90, 180, 270]
</script>

<template>
  <div class="desktop">
    <header class="title">
      <div class="brand">
        <svg width="24" height="26" viewBox="0 0 24 26" aria-hidden="true">
          <path d="M6 3c6-3 8-1 4 3L6 10c6-1 8 3 3 8-2 2-4 4-7 5l5-12M22 8c-5-1-9 1-6 4 4 3 4 7-4 7" fill="none" stroke="#c8232c" stroke-width="2" />
        </svg>
        <span class="word"><b>SOLID</b>WORKS</span>
        <Ico class="more" name="right" :size="14" />
      </div>
      <div class="quick">
        <template v-for="q in quick" :key="q[1]">
          <button class="q" :aria-label="q[1]"><Ico :name="q[0]" :size="20" /></button>
          <button class="drop" :aria-label="q[1] + ' options'"><Ico name="caret" :size="14" /></button>
        </template>
        <button class="q on" aria-label="Select"><Ico name="cursor" :size="22" /></button>
        <button class="drop on2" aria-label="Select options"><Ico name="caret" :size="14" /></button>
        <button class="q" aria-label="Rebuild"><Ico name="traffic" :size="20" /></button>
        <button class="q" aria-label="File properties"><Ico name="options" :size="20" /></button>
        <button class="q" aria-label="Options"><Ico name="gear" :size="19" /></button>
        <button class="drop" aria-label="More options"><Ico name="caret" :size="14" /></button>
      </div>
      <h1>Sheet Metal Cover *</h1>
      <label class="search">
        <Ico name="query" :size="20" />
        <input type="text" placeholder="Search SOLIDWORKS Help" aria-label="Search help" />
        <Ico name="magnify" :size="18" />
        <Ico name="caret" :size="18" />
      </label>
      <div class="win">
        <button aria-label="Account"><Ico name="user" :size="20" /></button>
        <button aria-label="Help"><Ico name="help" :size="20" /></button>
        <button aria-label="Minimize"><Ico name="min" :size="18" /></button>
        <button aria-label="Restore"><Ico name="restore" :size="18" /></button>
        <button aria-label="Close"><Ico name="close" :size="16" /></button>
      </div>
    </header>

    <section class="ribbon">
      <div class="group first">
        <button class="big w80"><Ico name="base" :size="20" /><span>Base<br />Flange/Tab</span></button>
        <button class="big w80"><Ico name="convert" :size="20" /><span>Convert to<br />Sheet Metal</span></button>
        <button class="big w88"><Ico name="loft" :size="20" /><span>Lofted-Bend</span></button>
      </div>
      <div class="group">
        <div class="col colA"><button v-for="b in colA" :key="b[1]"><Ico :name="b[0]" :size="20" />{{ b[1] }}</button></div>
        <div class="col"><button v-for="b in colB" :key="b[1]"><Ico :name="b[0]" :size="20" />{{ b[1] }}</button></div>
      </div>
      <div class="group">
        <button class="big w60"><Ico name="corner" :size="20" /><span>Corners</span><Ico class="dn" name="caret" :size="14" /></button>
      </div>
      <div class="group">
        <button class="big w64"><Ico name="forming" :size="20" /><span>Forming<br />Tool</span></button>
        <button class="big w80"><Ico name="gusset" :size="20" /><span>Sheet Metal<br />Gusset</span></button>
      </div>
      <div class="group">
        <div class="col"><button v-for="b in colC" :key="b[1]"><Ico :name="b[0]" :size="20" />{{ b[1] }}</button></div>
      </div>
      <div class="group">
        <div class="col colD"><button v-for="b in colD" :key="b[1]" :disabled="!!b[2]"><Ico :name="b[0]" :size="20" />{{ b[1] }}</button></div>
        <button class="big w50" disabled><Ico name="noBends" :size="20" /><span>No<br />Bends</span></button>
      </div>
      <div class="group last">
        <button class="big w32"><Ico name="rip" :size="20" /><span>Rip</span></button>
        <button class="big w45" disabled><Ico name="insBends" :size="20" /><span>Insert<br />Bends</span></button>
      </div>
      <button class="collapse" aria-label="Collapse ribbon"><Ico name="chevU" :size="14" /></button>
    </section>

    <nav class="tabs">
      <div class="strip">
        <button v-for="t in ribbonTabs" :key="t" :class="{ cur: t === 'Sheet Metal' }">{{ t }}</button>
      </div>
      <div class="mdi">
        <button aria-label="Expand left"><Ico name="dockL" :size="18" /></button>
        <button aria-label="Expand right"><Ico name="dockR" :size="18" /></button>
        <button aria-label="Minimize document"><Ico name="min" :size="18" /></button>
        <button aria-label="Restore document"><Ico name="restore" :size="18" /></button>
        <button aria-label="Close document"><Ico name="close" :size="16" /></button>
      </div>
    </nav>

    <main class="work">
      <aside class="panel">
        <div class="grip"><i></i></div>
        <div class="ptabs">
          <button v-for="(p, n) in panelTabs" :key="p[1]" :class="{ cur: n === 0 }" :aria-label="p[1]"><Ico :name="p[0]" :size="20" /></button>
          <button class="half" aria-label="CAM tree"><Ico name="cam" :size="20" /></button>
          <button class="arr" aria-label="Scroll left"><Ico name="left" :size="12" /></button>
          <button class="arr end" aria-label="Scroll right"><Ico name="chevR" :size="16" /></button>
        </div>
        <label class="filter"><Ico name="funnel" :size="19" /><input type="text" aria-label="Filter tree" /></label>
        <div class="treewrap">
          <div class="treebox">
            <div class="root"><Ico name="part" :size="18" />Sheet Metal Cover (Default) &lt;&lt;De</div>
            <ul>
              <li v-for="r in tree" :key="r[1]">
                <button v-if="r[2]" class="exp" :aria-label="'Expand ' + r[1]"><Ico name="right" :size="11" /></button>
                <span v-else class="exp"></span>
                <Ico :name="r[0]" :size="18" />{{ r[1] }}
              </li>
            </ul>
          </div>
          <div class="vbar"><i></i></div>
        </div>
        <div class="hbar"><i></i></div>
      </aside>

      <section class="view">
        <svg class="scene" viewBox="277 145 1637 795" role="img" aria-label="Sheet metal cover model">
          <g stroke="#0c0d14" stroke-width="1.4" fill="#51535e">
            <path d="M937 295.500a23 23 0 0 1 46 0V434h4V417h220v17h4.500V295.500a23 23 0 0 1 46 0V532l23 22.500H1428a114.300 114.300 0 0 1 0 228.600H766a114.300 114.300 0 0 1 0-228.600H914l23-22.500z" />
            <path d="M937 338h46v12.500h-46zM1211.500 338h46v12.500h-46zM937 417h46v12.500h-46zM1211.500 417h46v12.500h-46zM868.500 554.500h12V783h-12zM1313.700 554.500h12.500V783h-12.500z" fill="#4e5057" />
            <g fill="#c5c7d1">
              <circle cx="960" cy="295.500" r="9.300" /><circle cx="1234.500" cy="295.500" r="9.300" />
              <circle cx="766" cy="668.800" r="45.600" />
              <path d="M937 623h320.600v9.500H1143a36.400 36.400 0 0 0 0 72.800h114.600v9.500H937v-9.500h114a36.400 36.400 0 0 0 0-72.800H937z" />
              <circle cx="1051" cy="668.800" r="16" /><circle cx="1143" cy="668.800" r="16" />
            </g>
            <path d="M956 632.500v72.800M969 632.500v72.800M1007 632.500v72.800M1019.500 632.500v72.800M1175 632.500v72.800M1187.500 632.500v72.800M1225.500 632.500v72.800M1237.500 632.500v72.800" fill="none" />
            <path d="M937 632.500h114M1143 632.500h114M937 705.300h114M1143 705.300h114" fill="none" />
            <g v-for="y in [508.5, 726.5]" :key="y" :transform="`translate(1042.5 ${y})`">
              <rect width="109" height="46" />
              <path d="M14 0h13.500v46H14zM95 0h14v46H95z" fill="#595b66" stroke="none" />
              <path d="M82 0h13v46H82z" fill="#777985" stroke="none" />
              <path d="M14 0v46M27.500 0v46M38 0v46M71 0v46M82 0v46M95 0v46M0 0h109v46H0z" fill="none" />
              <circle cx="54.500" cy="23" r="9.200" fill="#c5c7d1" />
            </g>
          </g>
          <g fill="none" stroke-linecap="round">
            <g v-for="a in slots" :key="a" :transform="`translate(766 668.8) rotate(${a})`">
              <path d="M-62.500-29A69 69 0 0 1-29-62.500" stroke="#0c0d14" stroke-width="14.400" />
              <path d="M-62.500-29A69 69 0 0 1-29-62.500" stroke="#c5c7d1" stroke-width="11.600" />
            </g>
          </g>
          <g transform="translate(1428 668.800)" stroke-linejoin="round" fill="#c5c7d1">
            <template v-for="(v, n) in vents" :key="n">
              <path :d="v.d" stroke="#0c0d14" :stroke-width="v.w + 2" />
              <path :d="v.d" stroke="#c5c7d1" :stroke-width="v.w - 1" />
            </template>
          </g>
          <g>
            <path d="M327.500 872h26" stroke="#e8707a" stroke-width="4" />
            <path d="M350 867l13 5-13 5z" fill="#d01822" />
            <path d="M327.500 872V842" stroke="#1a1eb8" stroke-width="4" />
            <path d="M322.500 846l5-12 5 12z" fill="#10148c" />
            <circle cx="327.500" cy="872" r="4" fill="#0b3b2c" />
            <text x="325" y="828" class="axis z">Z</text><text x="370" y="873" class="axis x">X</text>
          </g>
          <text x="614" y="558" class="mark"><tspan class="han">莫西网</tspan><tspan class="lat">www.3dmox.com</tspan></text>
        </svg>

        <div class="heads">
          <template v-for="i in heads" :key="i[1]">
            <button class="hb" :class="{ on: i[3] }" :aria-label="i[1]"><Ico :name="i[0]" :size="20" /></button>
            <button v-if="i[2]" class="hc" :class="{ on: i[3] }" :aria-label="i[1] + ' options'"><Ico name="caret" :size="12" /></button>
          </template>
        </div>
        <button class="knob" aria-label="Collapse panel"><i></i></button>
        <div class="pane">
          <button v-for="(p, n) in pane" :key="p[1]" :class="{ cur: n === 1 }" :aria-label="p[1]"><Ico :name="p[0]" :size="20" /></button>
        </div>
      </section>
    </main>

    <nav class="docs">
      <div class="navs">
        <button v-for="n in ['first', 'prv', 'nxt', 'last']" :key="n" :aria-label="n"><Ico :name="n" :size="16" /></button>
      </div>
      <button class="doc cur">Model</button>
      <button class="doc">3D Views</button>
      <button class="doc wide">Motion Study 1</button>
    </nav>

    <div class="filters">
      <button class="f" aria-label="Clear filters"><Ico name="filt0" :size="20" /></button>
      <button class="f" aria-label="Filter group"><Ico name="filt1" :size="20" /></button>
      <button class="f" aria-label="Filter all"><Ico name="filt2" :size="20" /></button>
      <button class="f sel" aria-label="Select"><Ico name="cursor" :size="22" /></button>
      <button class="fd" aria-label="Select options"><Ico name="caret" :size="14" /></button>
      <button class="f" aria-label="Magnified selection"><Ico name="mag0" :size="20" /></button>
      <div class="flist">
        <button v-for="(g, n) in filters" :key="n" class="f" :aria-label="'Filter ' + (n + 1)"><Ico :g="g" box="0 0 24 24" :size="21" /></button>
      </div>
    </div>

    <footer class="status">
      <span class="grow">SOLIDWORKS Premium 2023 SP0.1</span>
      <span class="mode">Editing Part</span>
      <span class="unit">MMGS</span>
      <Ico name="caretUp" :size="14" />
      <Ico class="tag" name="status" :size="16" />
    </footer>

    <div class="taskbar">
      <button class="widget" aria-label="Widgets">
        <svg width="40" height="40" viewBox="0 0 40 40" aria-hidden="true">
          <circle cx="12" cy="13" r="6" fill="#3d8ff0" /><circle cx="11" cy="11" r="2.500" fill="#a8d3fb" />
          <circle cx="16" cy="24" r="6" fill="#8fc0f5" /><circle cx="25" cy="24" r="7" fill="#a9cff8" />
          <path d="M15 25h14v6l-2 7-4 1-1-6-2 6-4-1z" fill="#5aa0f0" />
          <circle cx="28" cy="11" r="10" fill="#c42b1c" />
          <text x="28" y="16" class="badge">1</text>
        </svg>
      </button>
      <div class="gapA"></div>
      <div class="apps">
        <button v-for="(a, n) in apps" :key="n" class="app" :class="{ hot: a.run === 2, run: a.run }" :aria-label="a.n"><Ico :g="a.g" box="0 0 32 32" :size="32" /></button>
      </div>
      <div class="gapB"></div>
      <div class="tray">
        <button class="tb" aria-label="Hidden icons"><Ico name="chevU" :size="16" /></button>
        <button class="tb wide" aria-label="Calendar">
          <svg width="22" height="24" viewBox="0 0 22 24" aria-hidden="true"><path d="M3 1l3 2 3-2v6l-3-2-3 2zM12 1l3 2 3-2v6l-3-2-3 2z" fill="#222" stroke="#222" /><rect x="1" y="8" width="19" height="13" rx="1" fill="#d6131f" /><text x="10" y="18" class="date">11</text></svg>
        </button>
        <button class="lang">ENG<br />IN</button>
        <button class="net" aria-label="Network, volume, battery">
          <svg width="88" height="24" viewBox="0 0 88 24" fill="none" stroke="#222" stroke-width="1.500" aria-hidden="true">
            <path d="M3 10a14 14 0 0 1 19 0M6 13a10 10 0 0 1 13 0M9 16a5 5 0 0 1 7 0" /><circle cx="12.500" cy="18.500" r="1.500" fill="#222" />
            <path d="M33 10h4l5-4v13l-5-4h-4zM44 9.500q2 3 0 6M47 7.500q4 5 0 10M50 5.500q5 7 0 14" />
            <path d="M65 9h-3v10h16V9h-8M78 12h2v4h-2" /><path d="M67 3l-4 6h4l-1 5" />
          </svg>
        </button>
        <button class="clock">9:52 PM<br />9/10/2024</button>
        <button class="bell" aria-label="Notifications">
          <svg width="20" height="22" viewBox="0 0 20 22" fill="none" stroke="#222" stroke-width="1.400" aria-hidden="true"><path d="M2.500 16.500C5 14 4 9 5 6.500c2-5 8-5 10 0 1 2.500 0 7.500 2.500 10zM8 17q2 4 4 0" /></svg>
        </button>
        <button class="copilot" aria-label="Copilot">
          <svg width="34" height="34" viewBox="0 0 34 34" aria-hidden="true"><path d="M12 2h8c4 0 5 6 6 9H14L9 25c-6 2-9-2-7-7z" fill="#2a9be8" /><path d="M3 17L8 5l8 6-5 15c-5 1-10-2-8-9z" fill="#45bfa6" /><path d="M20 9h7c4 2 4 8 2 13l-4 6-9 2z" fill="#c35bd8" /><path d="M14 2h6c3 0 5 5 6 8l-9 1z" fill="#2556c8" /><rect x="10" y="22" width="22" height="11" rx="2" fill="#f8c400" /><text x="21" y="31" class="pre">PRE</text></svg>
        </button>
      </div>
    </div>
  </div>
</template>

<style>
body { margin: 0; }
</style>

<style scoped>
.desktop {
  display: flex;
  flex-direction: column;
  height: 100vh;
  overflow: hidden;
  background: #f7f7f7;
  color: #1d1d1f;
  font: 13px/18px "Open Sans", "Noto Sans", sans-serif;
}
button {
  display: flex;
  align-items: center;
  justify-content: center;
  flex: none;
  margin: 0;
  padding: 0;
  border: 0;
  background: none;
  color: inherit;
  font: inherit;
}
input { border: 0; outline: 0; padding: 0; background: none; font: inherit; min-width: 0; flex: 1; }
svg { flex: none; display: block; }

.title { display: flex; align-items: stretch; flex: none; height: 34px; background: #e6e6e6; border-bottom: 1px solid #c3c3c3; }
.brand { display: flex; align-items: center; width: 145px; box-sizing: border-box; padding: 0 0 4px 4px; background: #fafafa; border-right: 1px solid #d0d0d0; }
.word { margin-left: 1px; color: #c8232c; font-size: 13px; font-style: italic; }
.more { margin-left: auto; }
.quick { display: flex; padding: 0 0 4px 21px; }
.q { width: 32px; padding-bottom: 2px; }
.drop { width: 15px; }
.q.on { background: #ababab; box-shadow: inset 0 -1px #777, inset 1px 0 #777; }
.drop.on2 { background: #cfcfcf; box-shadow: inset 0 0 0 1px #999; }
h1 { flex: 1; margin: 0; font: inherit; line-height: 32px; text-align: center; }
.search { display: flex; align-items: center; gap: 7px; width: 251px; height: 27px; margin-top: 2px; padding: 0 0 0 5px; box-sizing: border-box; background: #fff; border: 1px solid #c4c4c4; }
.search input::placeholder { color: #555; opacity: 1; }
.search svg:last-child { margin-left: -7px; }
.win { display: flex; gap: 1px; padding-left: 4px; padding-bottom: 4px; }
.win button { width: 40px; }

.ribbon { display: flex; flex: none; height: 81px; background: #f7f7f7; }
.group { display: flex; align-items: flex-start; margin: 1px 0 4px; border-right: 1px solid #d2d2d2; }
.group.first { padding-left: 3px; }
.group.last { border: 0; }
.big { flex-direction: column; justify-content: flex-start; height: 73px; padding-top: 5px; line-height: 19px; text-align: center; }
.big span { margin-top: 1px; }
.big .dn { margin-top: 13px; }
.w80 { width: 80px; } .w88 { width: 88px; } .w60 { width: 60px; } .w64 { width: 64px; } .w50 { width: 50px; } .w45 { width: 45px; } .w32 { width: 32px; }
.col { display: flex; flex-direction: column; padding: 0 10px 0 4px; }
.col button { justify-content: flex-start; gap: 6px; height: 26px; white-space: nowrap; }
.colA { width: 104px; padding-left: 2px; padding-right: 9px; }
.colD { width: 64px; }
button:disabled { color: #b4b4b4; }
.collapse { width: 18px; height: 20px; margin: 58px 0 0 auto; }

.tabs { display: flex; flex: none; justify-content: space-between; height: 28px; background: #c5c7d1; border-top: 1px solid #808288; }
.strip { display: grid; grid-template-columns: 75px 62px 107px 94px 74px 136px 173px 56px 157px 188px 190px; font-size: 14px; }
.strip button { background: #d4d4d4; border-right: 1px solid #77797e; border-bottom: 1px solid #77797e; color: #333; white-space: nowrap; }
.strip .cur { margin-top: -1px; background: #f7f7f7; font-weight: 700; color: #222; }
.mdi { display: flex; opacity: .7; }
.mdi button { width: 26px; padding-top: 4px; }

.work { display: flex; flex: 1; min-height: 0; }
.panel { display: flex; flex-direction: column; width: 277px; flex: none; box-sizing: border-box; background: #f7f7f7; border-right: 1px solid #77797e; padding-bottom: 10px; }
.grip { display: flex; align-items: center; justify-content: center; height: 18px; flex: none; margin-top: 4px; border: 1px solid #c9c9c9; border-width: 1px 0; }
.grip i, .knob i { width: 4px; height: 4px; border: 1px solid #999; border-radius: 50%; }
.ptabs { display: flex; flex: none; height: 26px; margin-top: 4px; border-top: 1px solid #77797e; margin-right: 2px; }
.ptabs button { width: 40px; box-sizing: border-box; background: #d4d4d4; border-right: 1px solid #77797e; border-bottom: 1px solid #77797e; }
.ptabs .cur { width: 42px; background: #f7f7f7; border-bottom: 0; }
.ptabs .half { width: 29px; }
.ptabs .arr { width: 22px; background: #f7f7f7; border-color: #bbb; }
.ptabs .end { flex: 1; border-right: 0; }
.filter { display: flex; align-items: center; flex: none; height: 29px; margin: 0 5px; padding-left: 1px; background: #fbfbfb; border: 1px solid #bcbcbc; }
.treewrap { display: flex; flex: 1; min-height: 0; margin-top: 1px; }
.treebox { flex: 1; overflow: hidden; font-size: 14px; }
.root { display: flex; align-items: center; gap: 4px; height: 24px; padding-left: 5px; white-space: nowrap; }
ul { margin: 0; padding: 0; list-style: none; }
li { display: flex; align-items: center; height: 24px; gap: 5px; white-space: nowrap; }
.exp { width: 22px; flex: none; padding-left: 2px; box-sizing: border-box; }
.vbar { width: 20px; flex: none; background: #f0f0f0; display: flex; justify-content: center; align-items: flex-start; padding-top: 21px; box-sizing: border-box; }
.vbar i { width: 6px; height: 69%; background: #858585; }
.hbar { flex: none; height: 14px; padding: 7px 20px 0 22px; box-sizing: border-box; }
.hbar i { display: block; width: 130px; height: 6px; background: #858585; }

.view { position: relative; flex: 1; min-width: 0; background: #c5c7d1; }
.scene { width: 100%; height: 100%; }
.axis { font: 11px "Open Sans", sans-serif; }
.z { fill: #3339d0; } .x { fill: #d0303a; }
.mark { fill: #fff; fill-opacity: .72; }
.han { font: 300 72px "Noto Sans CJK SC", sans-serif; }
.lat { font: 66px "Liberation Serif", serif; }
.heads { position: absolute; top: 2px; left: 0; right: 0; display: flex; justify-content: center; height: 26px; }
.hb { width: 26px; } .hc { width: 14px; opacity: .6; }
.hb.on { background: #9b9da4; box-shadow: inset 0 0 0 1px #777; }
.hc.on { background: #b9bbc4; box-shadow: inset 0 0 0 1px #888; opacity: 1; }
.knob { position: absolute; left: -1px; top: 45%; width: 12px; height: 49px; background: #f4f4f6; border: 1px solid #77797e; border-left: 0; }
.pane { position: absolute; right: 0; top: 30px; width: 26px; border: 1px solid #85878f; border-right: 0; }
.pane button { width: 26px; height: 30px; box-sizing: border-box; padding-left: 6px; justify-content: flex-start; overflow: hidden; background: #d0d1d5; border-bottom: 1px solid #85878f; }
.pane button:last-child { border-bottom: 0; height: 29px; }
.pane .cur { background: #f7f7f7; }

.docs { display: flex; flex: none; height: 20px; border-top: 1px solid #77797e; font-size: 15px; background: #f7f7f7; }
.navs { display: flex; padding-left: 2px; width: 80px; border-right: 1px solid #555; background: #8d8fa6; }
.navs button { flex: 1; background: #b5b6ca; border: 1px solid #8d8fa6; box-sizing: border-box; }
.doc { width: 89px; background: #d4d4d4; border-right: 1px solid #77797e; box-sizing: border-box; }
.doc.cur { width: 76px; background: #f7f7f7; font-weight: 700; font-size: 14px; }
.doc.wide { width: 144px; justify-content: flex-start; padding-left: 13px; }

.filters { display: flex; align-items: center; flex: none; height: 33px; padding: 2px 0 0 13px; background: #f7f7f7; border-bottom: 1px solid #85878a; box-sizing: border-box; }
.f { width: 27px; height: 26px; }
.f.sel { width: 32px; background: #b2b2b2; box-shadow: inset 0 0 0 1px #888; }
.fd { width: 13px; height: 26px; box-shadow: inset 0 0 0 1px #888; }
.flist { display: flex; align-items: center; height: 30px; margin-left: 2px; padding: 0 6px; border-left: 1px solid #bbb; border-right: 1px solid #555; }

.status { display: flex; align-items: center; flex: none; height: 23px; padding: 2px 1px 0; box-sizing: border-box; background: #e6e6e6; border-bottom: 1px solid #b8b8b8; font-size: 14px; }
.grow { flex: 1; }
.mode { width: 202px; }
.unit { width: 65px; }
.tag { margin-left: 20px; }

.taskbar { display: flex; flex: none; height: 53px; padding-top: 3px; box-sizing: border-box; background: linear-gradient(90deg, #f1dfc8, #f2dcd0 25%, #f4dcd6 45%, #f7e3dd 70%, #eadbcf 82%, #f3ddd9 95%, #f6e0dc); }
.widget { width: 82px; }
.gapA { flex: 245; } .gapB { flex: 76; }
.apps { display: flex; }
.app { position: relative; width: 55px; }
.hot::before { content: ""; position: absolute; inset: 1px 3px 1px; border-radius: 6px; background: #e9a9a6; z-index: 0; }
.app svg { position: relative; overflow: visible; }
.run::after { content: ""; position: absolute; bottom: 0; left: 50%; width: 7px; height: 4px; margin-left: -3px; border-radius: 2px; background: #8a817d; }
.hot::after { background: #c42b2b; }
.tray { display: flex; line-height: 20px; }
.tb { width: 31px; } .tb.wide { width: 48px; }
.lang { width: 50px; }
.net { width: 96px; padding-left: 8px; }
.clock { width: 86px; justify-content: flex-end; text-align: right; font-size: 14px; line-height: 20px; }
.bell { width: 38px; }
.copilot { width: 60px; padding-right: 5px; }
.badge { font: 14px "Open Sans", sans-serif; fill: #fff; text-anchor: middle; }
.date { font: 700 10px "Open Sans", sans-serif; fill: #fff; text-anchor: middle; }
.pre { font: 700 10px "Open Sans", sans-serif; text-anchor: middle; }
</style>
